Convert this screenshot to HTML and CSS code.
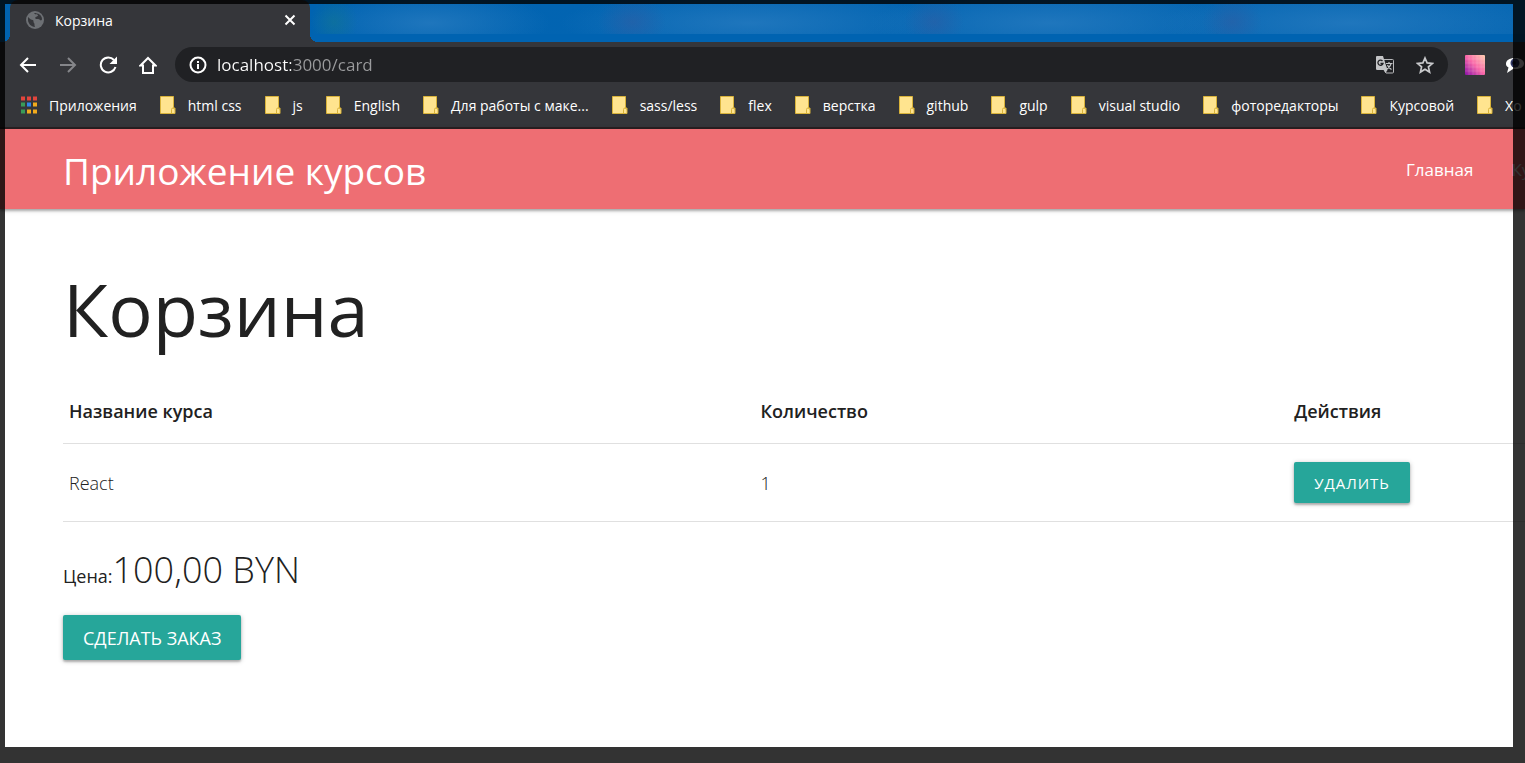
FILE: index.html
```html
<!DOCTYPE html>
<html lang="ru">
<head>
<meta charset="utf-8">
<title>Корзина</title>
<link rel="stylesheet" href="styles.css">
</head>
<body>
<svg class="defs" width="0" height="0" aria-hidden="true">
  <symbol id="folder" viewBox="0 0 16 18">
    <path d="M.5.5h13v11.500h1.500v5.500H.5z" fill="#ffe48f" stroke="#d9b33a"/>
    <path d="M11.500 17v-3.500a1.500 1.500 0 0 1 3 0" fill="none" stroke="#d9b33a"/>
  </symbol>
</svg>
<div class="window">
  <header class="browser">
    <div class="tabstrip">
      <div class="tab">
        <svg class="tab-icon" viewBox="0 0 18 18"><circle cx="9" cy="9" r="9" fill="#6d7074"/><path d="M2 6c2 2 3 3 5 3 1 1 0 2 1 3s0 2 1 4c-4 0-7-4-7-7zM8 2c1 2 3 1 4 2 0 2-2 1-3 3 1 2 4 0 5 2 1 1 2 0 2-1 0-4-4-6-8-6z" fill="#35363a"/></svg>
        <span class="tab-title">Корзина</span>
        <button class="tab-close" aria-label="Закрыть вкладку"><svg viewBox="0 0 12 12"><path d="M1.500 1.500l9 9M10.500 1.500l-9 9" stroke="#fff" stroke-width="2"/></svg></button>
      </div>
      <div class="blurred-tabs"></div>
    </div>
    <div class="toolbar">
      <button class="tool" aria-label="Назад"><svg viewBox="0 0 18 18"><path d="M17 9H2.500M9 2L2 9l7 7" fill="none" stroke="#fff" stroke-width="2"/></svg></button>
      <button class="tool" aria-label="Вперёд"><svg viewBox="0 0 18 18"><path d="M1 9h14.500M9 2l7 7-7 7" fill="none" stroke="#85868a" stroke-width="2"/></svg></button>
      <button class="tool" aria-label="Обновить"><svg viewBox="0 0 18 18"><path d="M15 4A7.500 7.500 0 1 0 16.500 11" fill="none" stroke="#fff" stroke-width="2"/><path d="M18 .5V8h-7.500z" fill="#fff"/></svg></button>
      <button class="tool" aria-label="Домой"><svg viewBox="0 0 18 18"><path d="M1.500 9.500L9 2l7.500 7.500H14V17H4V9.500z" fill="none" stroke="#fff" stroke-width="2"/></svg></button>
      <div class="omnibox">
        <svg class="info" viewBox="0 0 18 18"><circle cx="9" cy="9" r="7.500" fill="none" stroke="#fff" stroke-width="2"/><path d="M8 8h2v5H8zM8 5h2v2H8z" fill="#fff"/></svg>
        <input class="url" type="text" value="localhost:3000/card" aria-label="Адрес">
        <button class="tool" aria-label="Перевести"><svg viewBox="0 0 18 18"><path d="M7 3.500h9.500q1 0 1 1v11.500q0 1-1 1H10l-2-3" fill="none" stroke="#b8b9bb"/><path d="M1 0h6l4.500 14H1.200Q0 14 0 13V1q0-1 1-1z" fill="#c4c5c7"/><path d="M8 14h3.500L9.500 17z" fill="#c4c5c7"/><path d="M6.500 5A2.600 2.600 0 1 0 7 7.500H4.500" fill="none" stroke="#202124" stroke-width="1.300"/><path d="M10 7.500h6.500M13 6v1.500M15 8q-1 3-4 5M11.500 9q1 3 4 4.500" fill="none" stroke="#c4c5c7" stroke-width="1.200"/></svg></button>
        <button class="tool" aria-label="Добавить в закладки"><svg viewBox="0 0 18 18"><path d="M9 2l2.100 4.900 5.300.5-4 3.500 1.200 5.200L9 13.300l-4.600 2.800 1.200-5.200-4-3.500 5.300-.5z" fill="none" stroke="#c8c9cb" stroke-width="1.700"/></svg></button>
      </div>
      <div class="extensions">
        <button class="tool" aria-label="Палитра"><svg class="palette" viewBox="0 0 20 20"><defs><linearGradient id="pal" x1="0" y1="1" x2="1" y2="0"><stop offset="0" stop-color="#8a12a8"/><stop offset=".5" stop-color="#f968a8"/><stop offset="1" stop-color="#ffd0b0"/></linearGradient></defs><rect width="20" height="20" rx="1" fill="url(#pal)"/><path d="M4 0v20M8 0v20M12 0v20M16 0v20M0 4h20M0 8h20M0 12h20M0 16h20" stroke="#fff" stroke-opacity=".13"/></svg></button>
        <button class="tool" aria-label="Расширение"><svg class="eye" viewBox="0 0 20 18"><path d="M10 2c6 0 9 2.500 9 5.500S16 13 10 13l-2 0-6 4 1.500-5.500C1 10 1 9 1 7.500 1 4.500 4 2 10 2z" fill="#fff"/><circle cx="10" cy="7" r="4.500" fill="#333a68"/><circle cx="9" cy="7" r="2" fill="#10132b"/></svg></button>
      </div>
    </div>
    <nav class="bookmarks" aria-label="Закладки">
      <a href="#"><svg class="mark apps" viewBox="0 0 16 17"><path d="M0 0h4v4H0zM6 0h4v4H6zM12 0h4v4h-4z" fill="#e2453c"/><path d="M0 6h4v4H0zM0 13h4v4H0z" fill="#3a9b57"/><path d="M6 6h4v4H6z" fill="#2f86ea"/><path d="M12 6h4v4h-4zM6 13h4v4H6zM12 13h4v4h-4z" fill="#f2ab1d"/></svg>Приложения</a>
      <a href="#"><svg class="mark"><use href="#folder"/></svg>html css</a>
      <a href="#"><svg class="mark"><use href="#folder"/></svg>js</a>
      <a href="#"><svg class="mark"><use href="#folder"/></svg>English</a>
      <a href="#"><svg class="mark"><use href="#folder"/></svg>Для работы с маке...</a>
      <a href="#"><svg class="mark"><use href="#folder"/></svg>sass/less</a>
      <a href="#"><svg class="mark"><use href="#folder"/></svg>flex</a>
      <a href="#"><svg class="mark"><use href="#folder"/></svg>верстка</a>
      <a href="#"><svg class="mark"><use href="#folder"/></svg>github</a>
      <a href="#"><svg class="mark"><use href="#folder"/></svg>gulp</a>
      <a href="#"><svg class="mark"><use href="#folder"/></svg>visual studio</a>
      <a href="#"><svg class="mark"><use href="#folder"/></svg>фоторедакторы</a>
      <a href="#"><svg class="mark"><use href="#folder"/></svg>Курсовой</a>
      <a href="#"><svg class="mark"><use href="#folder"/></svg>Хо</a>
    </nav>
  </header>
  <nav class="navbar">
    <a class="brand" href="#">Приложение курсов</a>
    <div class="nav-links">
      <a href="#">Главная</a>
      <a href="#">Ку</a>
    </div>
  </nav>
  <main class="content">
    <h1>Корзина</h1>
    <table>
      <thead>
        <tr><th class="col-name">Название курса</th><th class="col-count">Количество</th><th>Действия</th></tr>
      </thead>
      <tbody>
        <tr><td>React</td><td>1</td><td><button class="btn btn-small">УДАЛИТЬ</button></td></tr>
      </tbody>
    </table>
    <p class="total"><strong>Цена:</strong><span class="price">100,00 BYN</span></p>
    <button class="btn">СДЕЛАТЬ ЗАКАЗ</button>
  </main>
  <div class="shade"></div>
</div>
</body>
</html>
```
FILE: styles.css
```css
* {
  box-sizing: border-box;
}

body {
  margin: 0;
  font-family: "Open Sans", "Noto Sans", sans-serif;
  color: #212121;
  background: #fff;
}

a {
  color: inherit;
  text-decoration: none;
}

button {
  font-family: inherit;
  border: 0;
  background: none;
  cursor: pointer;
}

.defs {
  position: absolute;
}

.window {
  position: relative;
  display: flex;
  flex-direction: column;
  min-height: 100vh;
  overflow: hidden;
}

/* dimmed frame round the selected area */
.shade {
  position: absolute;
  inset: 0;
  border: solid rgba(0, 0, 0, .8);
  border-width: 4px 12px 16px 5px;
  pointer-events: none;
}

/* browser chrome */
.browser {
  background: #35363a;
  color: #fff;
  border-bottom: 2px solid #2a2022;
}

.tabstrip {
  display: flex;
  height: 42px;
  padding-left: 10px;
  background: #0063b1;
}

.tab {
  position: relative;
  display: flex;
  align-items: center;
  gap: 11px;
  width: 300px;
  padding: 0 14px 2px 16px;
  border-radius: 8px 8px 0 0;
  background: #35363a;
  font-size: 14px;
}

/* outward curves at the foot of the active tab */
.tab::before,
.tab::after {
  content: "";
  position: absolute;
  bottom: 0;
  width: 8px;
  height: 8px;
}

.tab::before {
  right: 100%;
  background: radial-gradient(circle at 0 0, transparent 8px, #35363a 8px);
}

.tab::after {
  left: 100%;
  background: radial-gradient(circle at 100% 0, transparent 8px, #35363a 8px);
}

.tab-icon {
  width: 18px;
  height: 18px;
}

.tab-title {
  flex: 1;
}

.tab-close {
  display: flex;
  padding: 0;
}

.tab-close svg {
  width: 12px;
  height: 12px;
}

.blurred-tabs {
  flex: 1;
  height: 34px;
  background:
    radial-gradient(24px 26px at 24px 22px, rgba(20, 120, 140, .5), transparent),
    radial-gradient(34px 26px at 322px 22px, rgba(50, 90, 160, .5), transparent),
    radial-gradient(30px 26px at 624px 22px, rgba(50, 90, 160, .5), transparent),
    radial-gradient(30px 26px at 922px 22px, rgba(50, 90, 160, .5), transparent),
    radial-gradient(120px 32px at 120px 23px, rgba(34, 120, 190, .9), transparent),
    radial-gradient(190px 32px at 440px 23px, rgba(34, 120, 190, .9), transparent),
    radial-gradient(180px 32px at 740px 23px, rgba(34, 120, 190, .9), transparent),
    radial-gradient(190px 32px at 1040px 23px, rgba(34, 120, 190, .9), transparent),
    linear-gradient(90deg, #0063b1, #0968b3);
}

.toolbar {
  display: flex;
  align-items: center;
  gap: 22px;
  height: 45px;
  padding-left: 19px;
}

.tool {
  display: flex;
  flex: none;
  padding: 0;
}

.tool svg {
  width: 18px;
  height: 18px;
}

.tool .palette,
.tool .eye {
  width: 20px;
  height: 20px;
}

.omnibox {
  display: flex;
  flex: 1;
  align-items: center;
  gap: 22px;
  height: 35px;
  margin-left: -4px;
  padding: 0 14px;
  border-radius: 18px;
  background: #202124;
}

.info {
  width: 18px;
  height: 18px;
  margin-right: -12px;
}

.url {
  flex: 1;
  min-width: 0;
  padding: 0;
  border: 0;
  font: 17px/24px "Open Sans", "Noto Sans", sans-serif;
  color: transparent;
  background: linear-gradient(90deg, #fff 74px, #9a9b9d 74px);
  background-clip: text;
  -webkit-background-clip: text;
}

.extensions {
  display: flex;
  gap: 20px;
  width: 60px;
  margin-left: -5px;
}

.bookmarks {
  display: flex;
  gap: 23px;
  height: 40px;
  padding: 0 0 4px 21px;
  font-size: 14px;
  white-space: nowrap;
}

.bookmarks a {
  display: flex;
  flex: none;
  align-items: center;
  gap: 12px;
}

.mark {
  width: 16px;
  height: 18px;
}

/* application */
.navbar {
  display: flex;
  align-items: center;
  justify-content: space-between;
  height: 80px;
  padding-left: 63px;
  color: #fff;
  background: #ee6e73;
  box-shadow: 0 2px 2px rgba(0, 0, 0, .2), 0 1px 5px rgba(0, 0, 0, .25);
}

.brand {
  padding-top: 2px;
  font-size: 37px;
}

.nav-links {
  display: flex;
  gap: 38px;
  width: 119px;
  font-size: 17px;
  white-space: nowrap;
}

.content {
  flex: 1;
  padding: 46px 0 40px 63px;
  font-size: 18px;
  line-height: 26px;
}

h1 {
  margin: 0 0 18px;
  font-size: 74px;
  font-weight: 400;
  line-height: 108px;
}

table {
  width: 100%;
  border-collapse: collapse;
  table-layout: fixed;
}

tr {
  border-bottom: 1px solid #e0e0e0;
}

th,
td {
  padding: 17px 6px 19px;
  text-align: left;
}

th {
  font-weight: 600;
}

td {
  padding: 18px 6px;
  font-weight: 300;
}

.col-name {
  width: 47.3%;
}

.col-count {
  width: 36.5%;
}

.btn {
  display: block;
  height: 45px;
  padding: 0 20px;
  border-radius: 2px;
  color: #fff;
  background: #26a69a;
  box-shadow: 0 2px 2px rgba(0, 0, 0, .2), 0 1px 5px rgba(0, 0, 0, .25);
  font-size: 18px;
  white-space: nowrap;
}

.btn-small {
  height: 41px;
  font-size: 15px;
  letter-spacing: 1px;
}

.total {
  margin: 21px 0 12px;
  line-height: 54px;
}

.total strong {
  font-weight: 500;
}

.price {
  font-size: 36px;
  font-weight: 300;
}
```
